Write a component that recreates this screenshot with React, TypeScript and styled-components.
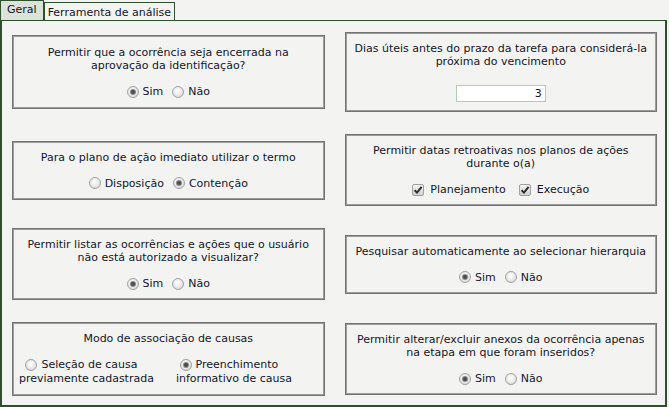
import React from 'react';
import styled, { createGlobalStyle } from 'styled-components';

const GlobalStyle = createGlobalStyle`
  html, body { margin: 0; padding: 0; background: #f3f4f1; }
  body {
    font-family: "DejaVu Sans", Verdana, sans-serif;
    font-size: 11px;
    color: #14142a;
  }
`;

const Page = styled.div`
  width: 667px;
`;

const TabStrip = styled.div`
  display: flex;
  align-items: flex-end;
  height: 20px;
`;

const Tab = styled.div<{ $active?: boolean }>`
  box-sizing: border-box;
  height: ${p => (p.$active ? '20px' : '18px')};
  line-height: ${p => (p.$active ? '17px' : '19px')};
  padding: 0 ${p => (p.$active ? '6px' : '3px')};
  border: 1px solid #2f4f2f;
  border-bottom: none;
  background: ${p => (p.$active ? '#dbe3d8' : '#f3f4f1')};
  white-space: nowrap;
`;

const Panel = styled.div`
  box-sizing: border-box;
  height: 387px;
  border: 2px solid #2f4f2f;
  border-top-width: 1px;
  padding: 11px 8px 0 10px;
  display: grid;
  grid-template-columns: 1fr 1fr;
  align-content: start;
  align-items: center;
  column-gap: 20px;
  row-gap: 22px;
`;

const Box = styled.div<{ $gap?: number; $pad?: number }>`
  box-sizing: border-box;
  border: 1px solid #737373;
  box-shadow: inset 0 0 0 1px #9c9c9c;
  padding: ${p => p.$pad ?? 9}px 6px;
  display: flex;
  flex-direction: column;
  gap: ${p => p.$gap ?? 13}px;
`;

const Title = styled.div`
  text-align: center;
  line-height: 13px;
`;

const Options = styled.div`
  display: flex;
  justify-content: center;
  align-items: center;
  height: 13px;
  line-height: 13px;
`;

const Item = styled.label<{ $space?: number; $textGap?: number }>`
  display: inline-flex;
  align-items: center;
  gap: ${p => p.$textGap ?? 4}px;
  margin-right: ${p => p.$space ?? 9}px;
  &:last-child { margin-right: 0; }
`;

const Radio = styled.span<{ $checked?: boolean }>`
  box-sizing: border-box;
  position: relative;
  display: inline-block;
  flex: none;
  width: 12px;
  height: 12px;
  border-radius: 50%;
  border: 1px solid #a2a2a2;
  background: radial-gradient(circle at 45% 40%, #ffffff 0%, #ececec 45%, #cdcdcd 100%);
  &::after {
    content: '';
    display: ${p => (p.$checked ? 'block' : 'none')};
    position: absolute;
    left: 3px;
    top: 3px;
    width: 4px;
    height: 4px;
    border-radius: 50%;
    background: #4a4a4a;
    box-shadow: 0 0 0 1px #8a8a8a;
  }
`;

const CheckBoxFrame = styled.span`
  box-sizing: border-box;
  display: inline-flex;
  align-items: center;
  justify-content: center;
  flex: none;
  width: 12px;
  height: 12px;
  border: 1px solid #a0a0a0;
  border-radius: 2px;
  background: linear-gradient(#f4f4f4, #d0d0d0);
`;

const NumberInput = styled.input`
  box-sizing: border-box;
  align-self: center;
  width: 90px;
  height: 17px;
  border: 1px solid #b6c8b6;
  background: #ffffff;
  padding: 0 3px 0 0;
  text-align: right;
  font: inherit;
  color: #14142a;
  outline: none;
`;

const CauseRow = styled.div`
  display: flex;
  gap: 22px;
`;

const CauseOption = styled.div`
  display: flex;
  flex-direction: column;
  align-items: center;
  line-height: 14px;
  white-space: nowrap;
`;

const CauseFirstLine = styled.span`
  display: inline-flex;
  align-items: center;
  gap: 4px;
  padding-right: 10px;
`;

function Check() {
  return (
    <CheckBoxFrame>
      <svg width="10" height="10" viewBox="0 0 10 10">
        <path d="M1.6 5.2 L4 7.6 L8.6 1.8" fill="none" stroke="#2b2b2b" strokeWidth="2" />
      </svg>
    </CheckBoxFrame>
  );
}

function YesNo({ yes }: { yes: boolean }) {
  return (
    <Options>
      <Item><Radio $checked={yes} />Sim</Item>
      <Item><Radio $checked={!yes} />Não</Item>
    </Options>
  );
}

export default function App() {
  return (
    <Page>
      <GlobalStyle />
      <TabStrip>
        <Tab $active>Geral</Tab>
        <Tab>Ferramenta de análise</Tab>
      </TabStrip>
      <Panel>
        <Box $gap={13} $pad={10}>
          <Title>Permitir que a ocorrência seja encerrada na<br />aprovação da identificação?</Title>
          <YesNo yes />
        </Box>
        <Box $gap={17}>
          <Title>Dias úteis antes do prazo da tarefa para considerá-la<br />próxima do vencimento</Title>
          <NumberInput defaultValue="3" />
        </Box>

        <Box>
          <Title>Para o plano de ação imediato utilizar o termo</Title>
          <Options>
            <Item><Radio />Disposição</Item>
            <Item><Radio $checked />Contenção</Item>
          </Options>
        </Box>
        <Box>
          <Title>Permitir datas retroativas nos planos de ações<br />durante o(a)</Title>
          <Options>
            <Item $textGap={6} $space={13}><Check />Planejamento</Item>
            <Item $textGap={6}><Check />Execução</Item>
          </Options>
        </Box>

        <Box>
          <Title>Permitir listar as ocorrências e ações que o usuário<br />não está autorizado a visualizar?</Title>
          <YesNo yes />
        </Box>
        <Box>
          <Title>Pesquisar automaticamente ao selecionar hierarquia</Title>
          <YesNo yes />
        </Box>

        <Box>
          <Title>Modo de associação de causas</Title>
          <CauseRow>
            <CauseOption>
              <CauseFirstLine><Radio />Seleção de causa</CauseFirstLine>
              <span>previamente cadastrada</span>
            </CauseOption>
            <CauseOption>
              <CauseFirstLine><Radio $checked />Preenchimento</CauseFirstLine>
              <span>informativo de causa</span>
            </CauseOption>
          </CauseRow>
        </Box>
        <Box>
          <Title>Permitir alterar/excluir anexos da ocorrência apenas<br />na etapa em que foram inseridos?</Title>
          <YesNo yes />
        </Box>
      </Panel>
    </Page>
  );
}
